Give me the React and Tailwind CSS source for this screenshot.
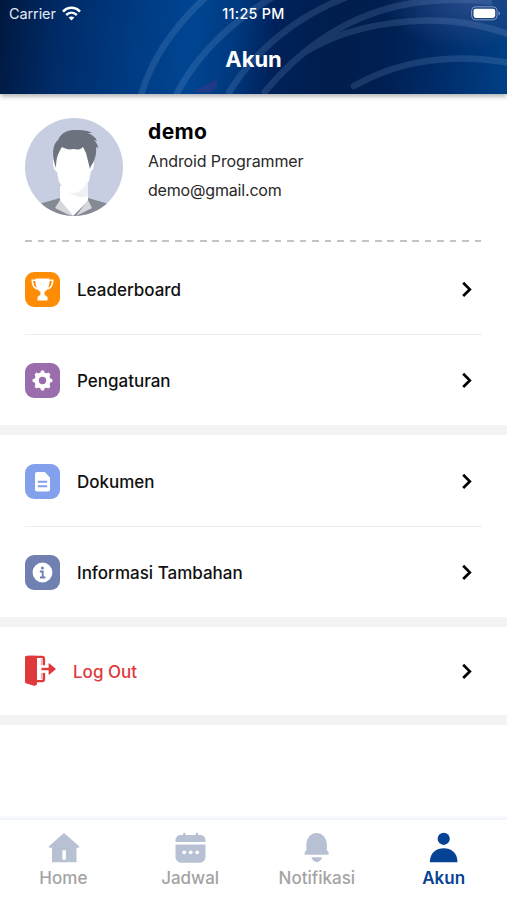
const menuGroups = [
  [
    { label: 'Leaderboard', color: 'bg-[#ff8c05]', icon: TrophyIcon },
    { label: 'Pengaturan', color: 'bg-[#9a6ead]', icon: GearIcon },
  ],
  [
    { label: 'Dokumen', color: 'bg-[#83a0ec]', icon: DocumentIcon },
    { label: 'Informasi Tambahan', color: 'bg-[#7080b0]', icon: InfoIcon },
  ],
];

const tabs = [
  { label: 'Home', icon: HomeIcon },
  { label: 'Jadwal', icon: CalendarIcon },
  { label: 'Notifikasi', icon: BellIcon },
  { label: 'Akun', icon: UserIcon, active: true },
];

function TrophyIcon() {
  return (
    <svg className="w-[35px] h-[35px]" viewBox="0 0 35 35" fill="none">
      <path d="M10.500 6.500h14c.4 6.500-1 11.200-5 13.300v3l3 2.100v3.600h-10v-3.600l3-2.100v-3c-4-2.100-5.400-6.800-5-13.300z" fill="#fff" />
      <path d="M11.500 8.300H7.300c0 4.500 1.700 7.700 5.400 8.800M23.500 8.300h4.200c0 4.500-1.700 7.700-5.400 8.800" stroke="#fff" strokeWidth="1.600" />
    </svg>
  );
}

function GearIcon() {
  return (
    <svg className="w-[35px] h-[35px]" viewBox="0 0 35 35">
      <g fill="#fff">
        <circle cx="17.500" cy="17.500" r="8" />
        {[0, 45, 90, 135].map((angle) => (
          <path key={angle} d="M16.200 7.600h2.600l1.300 3.400v13l-1.300 3.400h-2.600l-1.300-3.400V11z" transform={`rotate(${angle} 17.5 17.5)`} />
        ))}
      </g>
      <circle cx="17.500" cy="17.500" r="3.700" fill="#9a6ead" />
    </svg>
  );
}

function DocumentIcon() {
  return (
    <svg className="w-[35px] h-[35px]" viewBox="0 0 35 35">
      <path d="M12 8h7.800l5.200 5.500v12a2 2 0 0 1-2 2H12a2 2 0 0 1-2-2V10a2 2 0 0 1 2-2z" fill="#fff" />
      <path d="M12.800 17.700h9.400M12.800 22.200h9.400" stroke="#83a0ec" strokeWidth="1.900" />
    </svg>
  );
}

function InfoIcon() {
  return (
    <svg className="w-[35px] h-[35px]" viewBox="0 0 35 35">
      <circle cx="17.500" cy="17.500" r="9.900" fill="#fff" />
      <circle cx="17.400" cy="12.900" r="1.500" fill="#7080b0" />
      <path d="M14.800 16.500h2.900v6M15 22.500h5.400" stroke="#7080b0" strokeWidth="1.900" fill="none" />
    </svg>
  );
}

function LogoutIcon() {
  return (
    <svg className="w-[31px] h-[32px]" viewBox="0 0 31 32" fill="none">
      <path d="M1.500.8h9l1.500 2v26.400L9.800 31 1.500 28.600A1.800 1.800 0 0 1 0 27V2.600A1.800 1.800 0 0 1 1.500.8z" fill="#df393b" />
      <path d="M3 1.900h14c1.200 0 1.900.7 1.900 1.900v6.500M12 26.100h5c1.200 0 1.900-.7 1.900-1.900v-6.300" stroke="#df393b" strokeWidth="2.400" />
      <path d="M16.500 4v6.300M16.500 17.900v6" stroke="#df393b" strokeWidth="1.400" opacity=".4" />
      <path d="M16.500 14H25" stroke="#df393b" strokeWidth="2.400" />
      <path d="M23.600 8.500 24.200 8.200 31 14l-6.800 5.800-.6-.3z" fill="#df393b" />
    </svg>
  );
}

function ChevronIcon() {
  return (
    <svg className="w-[10px] h-[16px]" viewBox="0 0 10 16" fill="none" stroke="#000" strokeWidth="2.700">
      <path d="m1.200 1.800 6.600 6.600-6.600 6.600" />
    </svg>
  );
}

function HomeIcon() {
  return (
    <svg className="w-[32px] h-[32px]" viewBox="0 0 32 32">
      <path d="M16 1 31.500 14.600 30.700 15.700H28.500V30.200H4V15.700H1.300L.6 14.600z" fill="#b8c1d4" />
      <rect x="14.300" y="18.300" width="3.600" height="9.500" rx="1" fill="#fff" />
    </svg>
  );
}

function CalendarIcon() {
  return (
    <svg className="w-[32px] h-[32px]" viewBox="0 0 32 32">
      <path d="M9.300 2v4M22 2v4" stroke="#b8c1d4" strokeWidth="2.400" strokeLinecap="round" />
      <path d="M.5 10V8a5 5 0 0 1 5-5h20a5 5 0 0 1 5 5v2zM.5 12.400h30v12.800a5.500 5.500 0 0 1-5.500 5.500H6a5.500 5.500 0 0 1-5.500-5.500z" fill="#b8c1d4" />
      <g fill="#fff">
        <circle cx="9.200" cy="20.300" r="1.900" />
        <circle cx="15.700" cy="20.300" r="1.900" />
        <circle cx="22.200" cy="20.300" r="1.900" />
      </g>
    </svg>
  );
}

function BellIcon() {
  return (
    <svg className="w-[32px] h-[32px]" viewBox="0 0 32 32" fill="#b8c1d4">
      <path d="M5.300 12.500a10.300 11.500 0 0 1 20.600 0v5.700l1.700 2v2.500H3.600v-2.500l1.700-2zM10.300 25.200h11c-.9 2.800-2.500 4-5.500 5-3-1-4.600-2.200-5.500-5z" />
    </svg>
  );
}

function UserIcon() {
  return (
    <svg className="w-[32px] h-[32px]" viewBox="0 0 32 32" fill="#064395">
      <circle cx="15.700" cy="6.800" r="6.100" />
      <path d="M1.900 30.200v-1.500C2.700 20.500 8.200 16.300 15.700 16.300s13 4.200 13.700 12.400v1.500z" />
    </svg>
  );
}

function Avatar() {
  return (
    <svg className="w-[98px] h-[98px] shrink-0" viewBox="0 0 98 98">
      <defs>
        <clipPath id="avatar-clip">
          <circle cx="49" cy="49" r="49" />
        </clipPath>
      </defs>
      <g clipPath="url(#avatar-clip)">
        <path d="M0 0h98v98H0z" fill="#c7cee1" />
        <path d="M35 80 14 86v12h70V86L63 80z" fill="#858994" />
        <path d="M35 68v15l13 15 15-15V66z" fill="#fff" />
        <path d="m35 82-5 8 14 7 4 1zM63 82l4 8-12 6-4 2z" fill="#d5d7da" />
        <path d="M44 74c7-1 13-3 19-9v13c-6 2-13 1-19-4z" fill="#edf0f4" />
        <path d="M28 44c2-14 10-18 21-18s18 5 20 18c0 6-1 8-3 9l-2 10c-5 7-10 12-15 12s-10-3-15-11l-2-10c-3-2-4-5-4-10z" fill="#fff" />
        <path d="M31 50c-5-14-3-24 2-28 4-9 11-10 19-10 8 0 12 1 15 3l-4 0c5 2 8 5 9 8l-3-1c3 3 4 6 4 8l-2-1c1 8-2 15-5 19l-1 3-4-16-3-6c-4 4-7 2-10 2-4 1-7 0-11-2-4 6-6 11-6 21z" fill="#6d727f" />
      </g>
    </svg>
  );
}

function StatusBar() {
  return (
    <div className="relative flex items-center justify-between h-7 pl-[9px] pr-[6px] text-white">
      <div className="flex items-center gap-[6px]">
        <span className="text-[14.500px] tracking-[-0.100px] text-[#e3e9f4]">Carrier</span>
        <svg className="w-[19px] h-[15px] -mt-[2px]" viewBox="0 0 19 15" fill="none" stroke="#fff" strokeWidth="2.500">
          <path d="M1 5.600c5-5 12-5 17 0M4.200 9c3.200-3.100 7.400-3.100 10.600 0" />
          <path d="M9.500 14.500 6.600 11.600c1.700-1.500 4.100-1.500 5.800 0z" fill="#fff" stroke="none" />
        </svg>
      </div>
      <svg className="w-[30px] h-[15px] -mt-[2px]" viewBox="0 0 30 15">
        <rect x=".6" y=".8" width="25.500" height="13" rx="4" fill="none" stroke="#8097c2" strokeWidth="1" />
        <rect x="2.500" y="2.700" width="21.700" height="9.200" rx="2.300" fill="#fff" />
        <path d="M27.500 5.200c2 .8 2 3.500 0 4.400z" fill="#8097c2" />
      </svg>
      <span className="absolute left-1/2 -translate-x-1/2 text-[14.300px] tracking-[0.300px] font-medium whitespace-nowrap">11:25 PM</span>
    </div>
  );
}

function Header() {
  return (
    <header className="relative z-10 h-[94px] shrink-0 bg-[linear-gradient(97deg,#00183f_0%,#002b67_12%,#003b83_27%,#004592_38%,#003a80_46%,#00215a_54%,#001d4c_66%,#001f52_76%,#002e6c_88%,#004087_100%)] shadow-[0_2px_5px_rgba(0,0,0,0.35)]">
      {/* Light arcs behind the title */}
      <svg className="absolute inset-0 w-full h-full" viewBox="0 0 507 94" fill="none">
        <defs>
          <radialGradient id="glow" cx="0" cy="0" r="1" gradientUnits="userSpaceOnUse" gradientTransform="translate(468 2) scale(85 48)">
            <stop offset="0" stopColor="#31508f" stopOpacity=".75" />
            <stop offset="1" stopColor="#31508f" stopOpacity="0" />
          </radialGradient>
        </defs>
        <path d="M330 0h177v94H330z" fill="url(#glow)" />
        <path d="m192 92 25-13v9l-8 5z" fill="#573388" opacity=".35" />
        <g stroke="#87a8d5" strokeWidth="6.500" opacity=".19">
          <path d="M141 95C151 61 173 27 207-4" />
          <path d="M176 95C198 52 232 21 276-5" />
          <path d="M228 94C253 53 294 16 352-5" />
          <path d="M263 94C304 44 359 7 430 1c23-2 47-1 62 1" />
          <path d="M307 51C355 22 424 15 476 25c14 3 24 6 34 10" />
          <path d="M354 86C400 60 453 53 510 63" strokeLinecap="round" />
        </g>
      </svg>
      <StatusBar />
      <h1 className="relative mt-[15px] text-center text-[22px] leading-8 font-bold text-white">Akun</h1>
    </header>
  );
}

function MenuRow({ label, color, icon: Icon }) {
  return (
    <button className="flex items-center w-full h-[90px] pr-[10px] text-left">
      <span className={`w-[35px] h-[35px] rounded-[9px] ${color}`}>
        <Icon />
      </span>
      <span className="ml-[17px] pt-[4px] flex-1 text-[17px] font-medium text-[#101010]">{label}</span>
      <ChevronIcon />
    </button>
  );
}

export default function App() {
  return (
    <div className="flex flex-col w-full h-screen overflow-hidden bg-white font-['Inter',sans-serif]">
      <Header />

      <main className="flex-1 bg-white">
        <section className="flex items-start h-[146px] px-[25px] pt-[24px]">
          <Avatar />
          <div className="ml-[25px]">
            <h2 className="text-[21px] leading-[27px] tracking-[0.400px] font-bold text-black">demo</h2>
            <p className="mt-[4px] text-[16px] leading-[24px] tracking-[-0.120px] text-[#282828]">Android Programmer</p>
            <p className="mt-[5px] text-[16px] leading-[24px] tracking-[-0.180px] text-[#282828]">demo@gmail.com</p>
          </div>
        </section>
        <div className="mx-[25px] h-[2px] bg-[repeating-linear-gradient(90deg,#c4c4c4_0,#c4c4c4_6.500px,transparent_6.500px,transparent_12.500px)]" />

        {menuGroups.map((group, index) => (
          <section key={index} className={`px-[25px] border-b-[10px] border-[#f4f4f4] ${index === 0 ? 'pt-[2px]' : 'pt-[1px]'}`}>
            {group.map((item, i) => (
              <div key={item.label} className={i > 0 ? 'border-t border-[#ededed]' : ''}>
                <MenuRow {...item} />
              </div>
            ))}
          </section>
        ))}

        <button className="flex items-center w-full h-[98px] pl-[25px] pr-[35px] text-left border-b-[10px] border-[#f4f4f4]">
          <LogoutIcon />
          <span className="ml-[17px] pt-[3px] flex-1 text-[17px] font-medium text-[#df393b]">Log Out</span>
          <ChevronIcon />
        </button>
      </main>

      <nav className="grid grid-cols-4 h-[80px] shrink-0 pt-[12px] bg-white shadow-[0_-3px_3px_#f1f3fc]">
        {tabs.map(({ label, icon: Icon, active }) => (
          <button key={label} className="flex flex-col items-center">
            <span className="pl-[1px]">
              <Icon />
            </span>
            <span className={`mt-[3px] text-[17px] leading-[22px] ${active ? 'font-semibold text-[#064395]' : 'font-medium text-[#a3a3a3]'}`}>
              {label}
            </span>
          </button>
        ))}
      </nav>
    </div>
  );
}
